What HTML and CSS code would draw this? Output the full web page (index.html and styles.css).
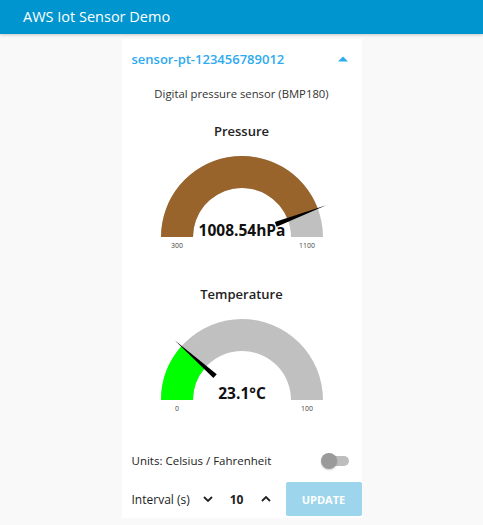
FILE: index.html
```html
<!DOCTYPE html>
<html lang="en">
<head>
    <meta charset="UTF-8">
    <meta name="viewport" content="width=device-width, initial-scale=1.0">
    <title>AWS Iot Sensor Demo</title>
    <link rel="stylesheet" href="styles.css">
</head>
<body>

    <header class="topbar">AWS Iot Sensor Demo</header>

    <div class="card">
        <div class="card-head">
            <span class="sensor-id">sensor-pt-123456789012</span>
            <svg class="caret" width="10" height="6" viewBox="0 0 10 6"><path d="M0 5.5 L5 0.5 L10 5.5 Z" fill="#2ea9ee"/></svg>
        </div>

        <div class="desc">Digital pressure sensor (BMP180)</div>

        <div class="gauge-title">Pressure</div>
        <svg class="gauge" width="180" height="100" viewBox="0 0 180 100">
            <path d="M9 88 A81 81 0 0 1 171 88 L139 88 A49 49 0 0 0 41 88 Z" fill="#c0c0c0"/>
            <path d="M9 88 A81 81 0 0 1 165.82 59.53 L135.87 70.78 A49 49 0 0 0 41 88 Z" fill="#99642c"/>
            <polygon points="124.58,77.69 122.82,73.01 174.26,56.36" fill="#000"/>
            <text x="90" y="87" class="gauge-value" text-anchor="middle">1008.54hPa</text>
            <text x="25" y="99" class="gauge-label" text-anchor="middle">300</text>
            <text x="155" y="99" class="gauge-label" text-anchor="middle">1100</text>
        </svg>

        <div class="gauge-title">Temperature</div>
        <svg class="gauge" width="180" height="100" viewBox="0 0 180 100">
            <path d="M9 88 A81 81 0 0 1 171 88 L139 88 A49 49 0 0 0 41 88 Z" fill="#c0c0c0"/>
            <path d="M9 88 A81 81 0 0 1 29.40 34.25 L53.34 55.48 A49 49 0 0 0 41 88 Z" fill="#00ff00"/>
            <polygon points="64.72,62.24 61.40,65.98 22.66,28.28" fill="#000"/>
            <text x="90" y="87" class="gauge-value" text-anchor="middle">23.1°C</text>
            <text x="25" y="99" class="gauge-label" text-anchor="middle">0</text>
            <text x="155" y="99" class="gauge-label" text-anchor="middle">100</text>
        </svg>

        <div class="units-row">
            <span>Units: Celsius / Fahrenheit</span>
            <span class="toggle"><span class="knob"></span></span>
        </div>

        <div class="interval-row">
            <span class="interval-label">Interval (s)</span>
            <svg class="chev" width="10" height="6" viewBox="0 0 10 6"><path d="M1 1 L5 5 L9 1" fill="none" stroke="#222" stroke-width="1.8"/></svg>
            <span class="interval-value">10</span>
            <svg class="chev" width="10" height="6" viewBox="0 0 10 6"><path d="M1 5 L5 1 L9 5" fill="none" stroke="#222" stroke-width="1.8"/></svg>
            <button class="update-btn" disabled>UPDATE</button>
        </div>
    </div>

</body>
</html>
```

FILE: styles.css
```css
body {
    margin: 0;
    background: #f9f9f9;
    font-family: "Segoe UI", "Open Sans", sans-serif;
    color: #222;
}
.topbar {
    height: 34px;
    line-height: 34px;
    padding-left: 23px;
    background: #0095cf;
    color: #fff;
    font-size: 14.5px;
    box-shadow: 0 1px 3px rgba(0, 0, 0, 0.2);
}
.card {
    width: 240px;
    margin: 5px auto 0;
    background: #fff;
    height: 479px;
    box-sizing: border-box;
    padding: 0 10px;
}
.card-head {
    display: flex;
    align-items: center;
    justify-content: space-between;
    height: 40px;
    padding-right: 4px;
}
.sensor-id {
    color: #2eaaf0;
    font-size: 13px;
    font-weight: 600;
}
.caret {
    display: block;
}
.desc {
    text-align: center;
    font-size: 11.3px;
    color: #333;
    margin-top: 7px;
}
.gauge-title {
    text-align: center;
    font-size: 13px;
    font-weight: 600;
    margin-top: 21px;
    height: 20px;
}
.gauge {
    display: block;
    margin: 7px auto 0;
}
.gauge + .gauge-title {
    margin-top: 36px;
}
.gauge-value {
    font-family: "Segoe UI", "Open Sans", sans-serif;
    font-weight: bold;
    font-size: 15.5px;
    fill: #111;
}
.gauge-label {
    font-family: "Segoe UI", "Open Sans", sans-serif;
    font-size: 7px;
    fill: #444;
}
.units-row {
    display: flex;
    align-items: center;
    justify-content: space-between;
    margin-top: 41px;
    font-size: 11.5px;
    padding-right: 3px;
}
.toggle {
    position: relative;
    width: 26px;
    height: 10px;
    border-radius: 5px;
    background: #bdbdbd;
}
.knob {
    position: absolute;
    left: -2px;
    top: -3px;
    width: 16px;
    height: 16px;
    border-radius: 50%;
    background: #9a9a9a;
    box-shadow: 0 1px 2px rgba(0, 0, 0, 0.2);
}
.interval-row {
    display: flex;
    align-items: center;
    margin-top: 14px;
    font-size: 12px;
}
.interval-label {
    width: 71px;
}
.chev {
    display: block;
}
.interval-value {
    font-weight: bold;
    width: 48px;
    text-align: center;
}
.update-btn {
    margin-left: auto;
    width: 76px;
    height: 34px;
    border: none;
    border-radius: 2px;
    background: #9dd5ec;
    color: #fff;
    font-family: "Segoe UI", "Open Sans", sans-serif;
    font-weight: bold;
    font-size: 11px;
    margin-right: -10px;
}
```
